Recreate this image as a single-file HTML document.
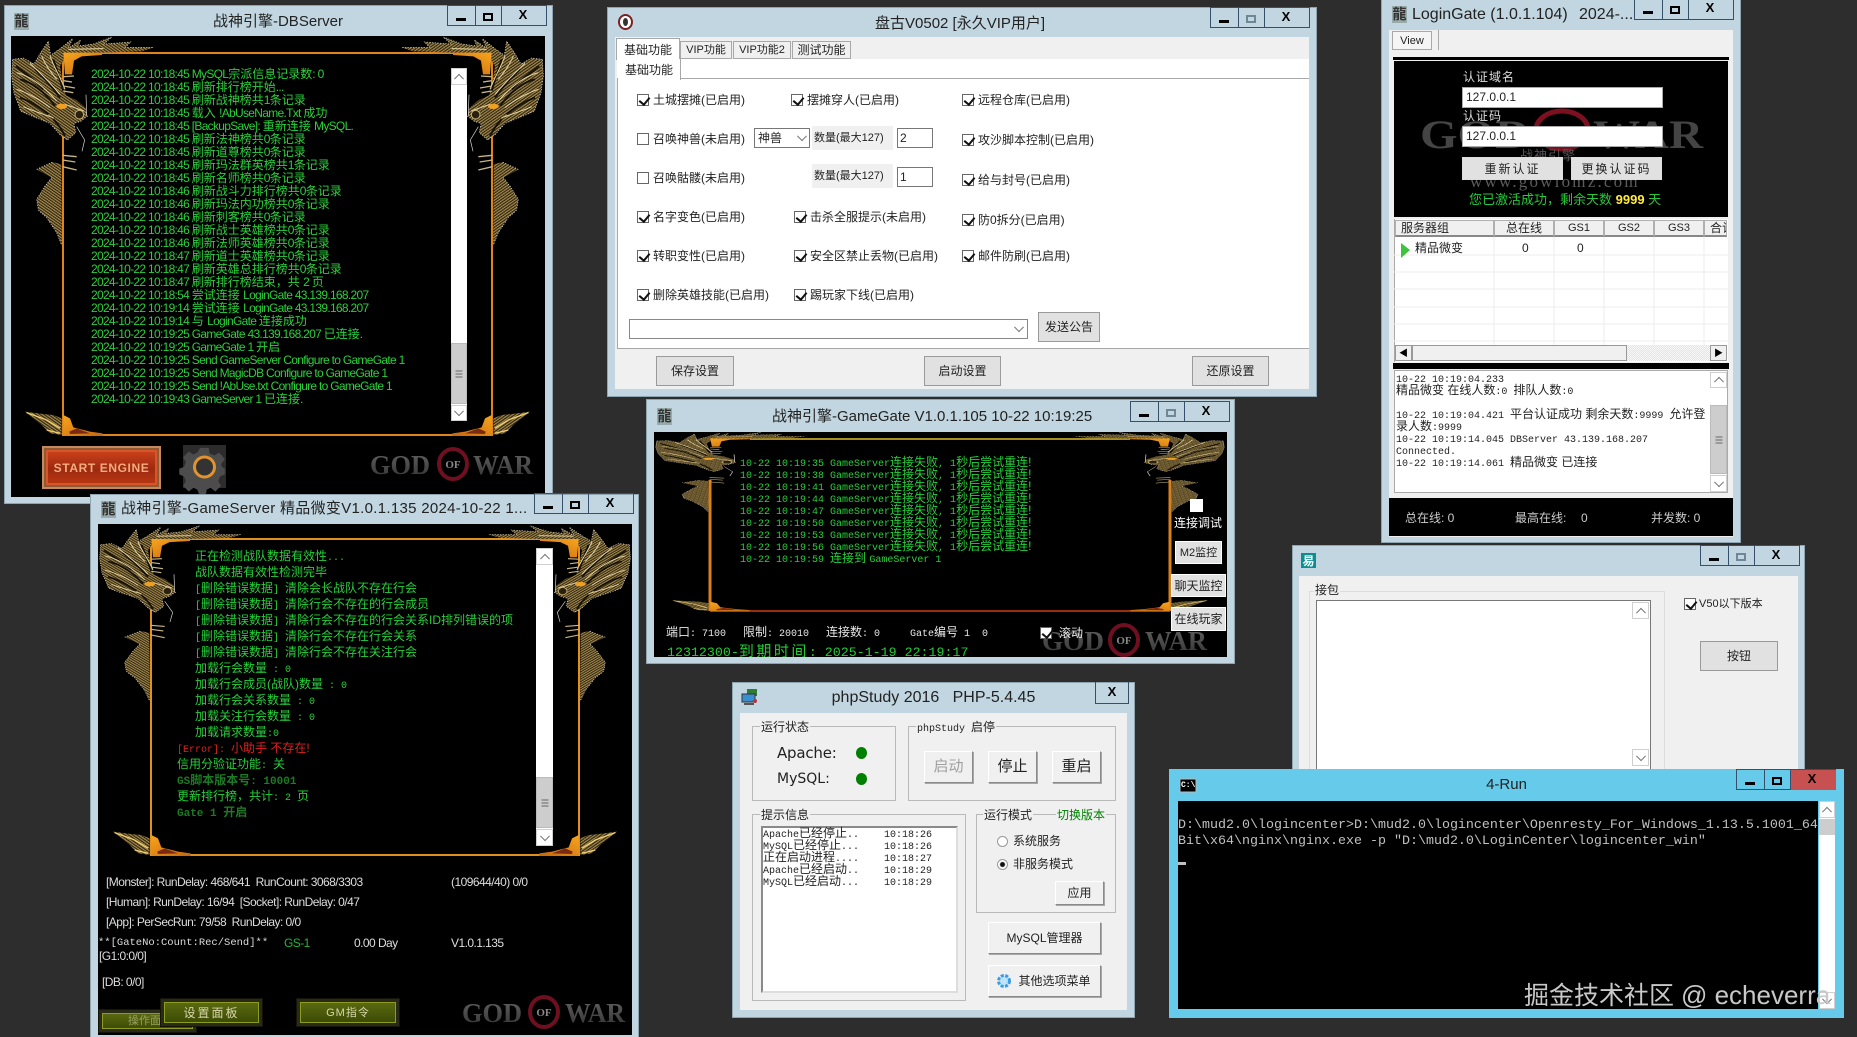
<!DOCTYPE html>
<html lang="zh-CN"><head><meta charset="utf-8"><title>Windows</title>
<style>
*{box-sizing:border-box;margin:0;padding:0}
html,body{width:1857px;height:1037px;overflow:hidden;background:#2d2d2d}
body{position:relative;font:12px/16px "Liberation Sans","Noto Sans CJK SC",sans-serif;color:#222}
div{position:absolute}
p{position:absolute;white-space:nowrap;line-height:16px}
i{font-style:normal}
svg{position:absolute;overflow:visible}
.win{background:#c1d6e0;border:1px solid #8ea5b1}
.k{background:#000}
.cl{background:#f0f0f0}
.wh{background:#fff}
.t{font-size:15px;line-height:20px;color:#222;text-align:center}
.tb{width:100px;height:21px;border:1px solid #34506a;border-top-color:#34506a}
.tb u{position:absolute;top:0;bottom:0;width:1px;background:#34506a}
.tb b{position:absolute}
.tb .mn{left:8px;top:12px;width:10px;height:3px;background:#000}
.tb .mx{left:35px;top:7px;width:10px;height:8px;border:2px solid #000}
.tb.g .mx{border-color:#6d8795}
.tb .xx{left:68px;top:1px;width:14px;text-align:center;font:bold 13px/16px "Liberation Sans",sans-serif;color:#000}
.ic{font:bold 14px/17px "Noto Sans CJK TC",sans-serif;color:#333;background:#9aa;text-align:center;width:15px;height:17px}
.db{color:#2bd03c;line-height:13px}
.ln{position:static;height:13px;white-space:pre}
.db i{font:12px/13px "Liberation Sans",sans-serif;letter-spacing:-.7px}
.mo{color:#27cf3b}
.mo .ln{height:16px;line-height:16px}
.mo i,.mi i{font:10px/12px "Liberation Mono",monospace}
.mo .bd i{font-weight:bold;font-size:11px}
.bd{color:#1c7a24;font-weight:bold;margin-left:-18px}
.mi .ln{height:12px;line-height:12px}
.nr{font:12px/16px "Liberation Sans",sans-serif;letter-spacing:-.55px;color:#ddd}
.ar{background:#fff;border:1px solid #cfcfcf}
.up:after,.dn:after{content:"";position:absolute;left:50%;top:50%;width:6px;height:6px;border-left:1px solid #777;border-top:1px solid #777}
.up:after{transform:translate(-50%,-25%) rotate(45deg)}
.dn:after{transform:translate(-50%,-75%) rotate(225deg)}
.th{background:#cdcdcd;border:1px solid #bbb}
.th:after{content:"";position:absolute;left:50%;top:50%;width:7px;height:7px;transform:translate(-50%,-50%);background:repeating-linear-gradient(#666 0 1px,transparent 1px 3px)}
.cb{position:absolute;width:12px;height:12px;background:#fff;border:1px solid #666}
.ck:after{content:"";position:absolute;left:3px;top:0;width:5px;height:8px;border-right:2px solid #111;border-bottom:2px solid #111;transform:rotate(40deg)}
.btn{display:flex;align-items:center;justify-content:center;background:#e1e1e1;border:1px solid #9a9a9a;white-space:nowrap}
.b3{display:flex;align-items:center;justify-content:center;background:#f0f0f0;border:1px solid #fff;border-right-color:#8a8a8a;border-bottom-color:#8a8a8a;box-shadow:1px 1px 0 #a8a8a8;white-space:nowrap}
.gb{border:1px solid #b9b9b9}
.la{background:#f0f0f0;padding:0 1px}
.tab{background:#f0f0f0;border:1px solid #a8a8a8;display:flex;align-items:center;justify-content:center;white-space:nowrap}
.pl{background:linear-gradient(#5b6a10,#3b4a06);border:3px solid #2a2a18;outline:1px solid #141408;display:flex;align-items:center;justify-content:center;color:#d7d7a8;white-space:nowrap;box-shadow:inset 0 0 0 1px #8c9c20}
.hd{background:#f0f0f0;border:1px solid #b0b0b0;border-bottom:2px solid #888;display:flex;align-items:center;justify-content:center;white-space:nowrap}
</style></head><body>

<svg width="0" height="0" style="left:0;top:0"><defs>
<pattern id="sc" width="7" height="7" patternUnits="userSpaceOnUse" patternTransform="rotate(35)">
<rect width="7" height="7" fill="#2c220e"/><rect width="7" height="3" fill="#a98f52"/><rect y="3" width="2" height="4" fill="#64522a"/></pattern>
<linearGradient id="gw" x1="0" y1="0" x2="0" y2="1"><stop offset="0" stop-color="#636363"/><stop offset="1" stop-color="#333"/></linearGradient>
<linearGradient id="co" x1="0" y1="0" x2="1" y2="1"><stop offset="0" stop-color="#f7a51e"/><stop offset="1" stop-color="#c8660f"/></linearGradient>
<symbol id="dr" viewBox="0 0 450 660" preserveAspectRatio="none">
<path fill="url(#sc)" d="M8 70L40 66L72 84L92 50L115 15L122 58L150 38L188 8L176 36L212 12L204 30L250 24L305 3L282 24L362 18L346 34L432 34L395 46L278 50L170 56L150 92L160 150L168 178L198 192L226 214L233 240L212 256L192 262L197 290L172 312L150 296L120 262L70 242L32 226L12 170L5 120Z"/>
<path fill="none" stroke="#fff" stroke-width="2" stroke-dasharray="3 5" d="M8 70L40 66L72 84L92 50L115 15L122 58L150 38L188 8L176 36L212 12L204 30L250 24L305 3L282 24L362 18L346 34L432 34M233 240L212 256L192 262L197 290L172 312L150 296L120 262L70 242L32 226L12 170L5 120L8 70"/>
<path fill="none" stroke="#000" stroke-width="6" opacity=".8" d="M30 130C70 140 105 170 135 210M75 100C105 130 125 150 150 185M30 185C60 195 90 215 115 235M130 70C140 100 150 130 160 165M130 250C145 265 155 280 165 300M18 90C40 110 70 125 100 160"/>
<path fill="none" stroke="#e4d6a4" stroke-width="3" d="M20 110C60 120 100 150 140 195M60 82C90 110 120 140 150 175M20 160C50 170 90 190 120 215M40 212C70 225 100 235 130 245M120 60C130 90 150 120 165 160M175 40L280 38M165 205L222 225M95 60C105 85 120 105 140 130"/>
<ellipse cx="155" cy="211" rx="16" ry="8" fill="#f0a020"/>
<circle cx="208" cy="236" r="13" fill="#2a2010" stroke="#c8b070" stroke-width="3"/>
<path fill="none" stroke="#ddd" stroke-width="2" d="M200 272L224 312L216 346M228 176L230 238"/>
<path fill="none" stroke="#c8b684" stroke-width="4" d="M160 122L192 120M160 134L186 138M160 150L195 156M160 165L190 170M158 358L200 362M158 372L196 378M158 392L200 402"/>
<path fill="url(#sc)" d="M80 400L128 378L154 385L156 630L140 590L110 545L85 522L80 490L105 450L125 425Z"/>
<path fill="none" stroke="#fff" stroke-width="2" stroke-dasharray="3 5" d="M80 400L128 378M125 425L105 450L80 490L85 522L110 545L140 590L154 625"/>
<path fill="url(#co)" d="M160 50L276 50L276 57L215 61L192 74L186 115L165 115Z"/>
</symbol>
<symbol id="fb" viewBox="0 0 300 120" preserveAspectRatio="none">
<path fill="url(#sc)" d="M45 35L100 42L130 45L155 55L155 105L120 100L95 75Z"/>
<path fill="none" stroke="#f0d070" stroke-width="4" d="M50 38L110 60L150 85M110 90L150 100"/>
<path fill="url(#co)" d="M160 45L180 55L190 82L240 95L278 100L278 108L160 108Z"/>
<path fill="#7a2a10" d="M178 95L200 85L240 100L180 102Z"/>
</symbol>
</defs></svg>

<!-- DBServer -->
<div class="win" style="left:4px;top:5px;width:549px;height:499px"></div>
<div class="k" style="left:11px;top:36px;width:534px;height:461px"></div>
<div class="ic" style="left:14px;top:13px">龍</div>
<p class="t" style="left:11px;top:12px;width:534px">战神引擎-DBServer</p>
<div class="tb" style="left:447px;top:5px"><u style="left:27px"></u><u style="left:53px"></u><b class="mn"></b><b class="mx"></b><b class="xx">X</b></div>
<svg width="1857" height="1037" style="left:0;top:0">
<rect x="63" y="53" width="429" height="382" fill="none" stroke="#e0831c" stroke-width="2"/>
<use href="#dr" x="10" y="36" width="150" height="220"/>
<use href="#dr" x="10" y="36" width="150" height="220" transform="matrix(-1 0 0 1 555 0)"/>
<use href="#fb" x="10" y="400" width="100" height="40"/>
<use href="#fb" x="10" y="400" width="100" height="40" transform="matrix(-1 0 0 1 555 0)"/>
</svg>
<div class="db" style="left:91px;top:68px">
<div class="ln"><i>2024-10-22 10:18:45 MySQL</i>宗派信息记录数<i>: 0</i></div>
<div class="ln"><i>2024-10-22 10:18:45 </i>刷新排行榜开始<i>...</i></div>
<div class="ln"><i>2024-10-22 10:18:45 </i>刷新战神榜共<i>1</i>条记录</div>
<div class="ln"><i>2024-10-22 10:18:45 </i>载入 <i>!AbUseName.Txt </i>成功</div>
<div class="ln"><i>2024-10-22 10:18:45 [BackupSave]: </i>重新连接 <i>MySQL.</i></div>
<div class="ln"><i>2024-10-22 10:18:45 </i>刷新法神榜共<i>0</i>条记录</div>
<div class="ln"><i>2024-10-22 10:18:45 </i>刷新道尊榜共<i>0</i>条记录</div>
<div class="ln"><i>2024-10-22 10:18:45 </i>刷新玛法群英榜共<i>1</i>条记录</div>
<div class="ln"><i>2024-10-22 10:18:45 </i>刷新名师榜共<i>0</i>条记录</div>
<div class="ln"><i>2024-10-22 10:18:46 </i>刷新战斗力排行榜共<i>0</i>条记录</div>
<div class="ln"><i>2024-10-22 10:18:46 </i>刷新玛法内功榜共<i>0</i>条记录</div>
<div class="ln"><i>2024-10-22 10:18:46 </i>刷新刺客榜共<i>0</i>条记录</div>
<div class="ln"><i>2024-10-22 10:18:46 </i>刷新战士英雄榜共<i>0</i>条记录</div>
<div class="ln"><i>2024-10-22 10:18:46 </i>刷新法师英雄榜共<i>0</i>条记录</div>
<div class="ln"><i>2024-10-22 10:18:47 </i>刷新道士英雄榜共<i>0</i>条记录</div>
<div class="ln"><i>2024-10-22 10:18:47 </i>刷新英雄总排行榜共<i>0</i>条记录</div>
<div class="ln"><i>2024-10-22 10:18:47 </i>刷新排行榜结束，共 <i>2 </i>页</div>
<div class="ln"><i>2024-10-22 10:18:54 </i>尝试连接 <i>LoginGate 43.139.168.207</i></div>
<div class="ln"><i>2024-10-22 10:19:14 </i>尝试连接 <i>LoginGate 43.139.168.207</i></div>
<div class="ln"><i>2024-10-22 10:19:14 </i>与 <i>LoginGate </i>连接成功</div>
<div class="ln"><i>2024-10-22 10:19:25 GameGate 43.139.168.207 </i>已连接<i>.</i></div>
<div class="ln"><i>2024-10-22 10:19:25 GameGate 1 </i>开启</div>
<div class="ln"><i>2024-10-22 10:19:25 Send GameServer Configure to GameGate 1</i></div>
<div class="ln"><i>2024-10-22 10:19:25 Send MagicDB Configure to GameGate 1</i></div>
<div class="ln"><i>2024-10-22 10:19:25 Send !AbUse.txt Configure to GameGate 1</i></div>
<div class="ln"><i>2024-10-22 10:19:43 GameServer 1 </i>已连接<i>.</i></div>
</div>
<div class="wh" style="left:451px;top:68px;width:16px;height:353px"></div>
<div class="ar up" style="left:451px;top:68px;width:16px;height:17px"></div>
<div class="th" style="left:451px;top:343px;width:16px;height:61px"></div>
<div class="ar dn" style="left:451px;top:405px;width:16px;height:16px"></div>
<div style="left:42px;top:446px;width:119px;height:43px;background:#8e5a34;border:2px solid #c48a5e;padding:0"></div>
<div style="left:46px;top:450px;width:111px;height:35px;background:linear-gradient(#c8401a,#9c2a10 55%,#b83612);border:2px solid #d8552a;display:flex;align-items:center;justify-content:center;color:#f4ab7e;font:bold 12px/16px 'Liberation Sans',sans-serif;letter-spacing:.6px;white-space:nowrap">START ENGINE</div>
<div style="left:183px;top:445px;width:43px;height:43px;background:#2c2c2c"></div>
<svg width="43" height="43" viewBox="0 0 43 43" style="left:183px;top:445px">
<path fill="#4c4c4c" d="M17 3h9l1 6 5 2 5-3 6 7-4 5 1 3 3 2v6l-5 2-2 5 3 5-6 6-5-4-4 2-1 5h-7l-2-5-4-2-5 4-6-6 3-5-2-5-5-2v-6l5-2 2-5-3-5 6-6 5 3 4-2z" transform="translate(1 0) scale(.95)"/>
<circle cx="21.500" cy="22" r="10" fill="#333" stroke="#e2932e" stroke-width="3"/>
</svg>
<svg width="163" height="34" viewBox="0 0 163 34" style="left:370px;top:448px">
<text x="0" y="26" font-family="Liberation Serif" font-weight="bold" font-size="27" textLength="60" lengthAdjust="spacingAndGlyphs" fill="url(#gw)">GOD</text>
<ellipse cx="83" cy="16" rx="14" ry="15" fill="none" stroke="#6e1020" stroke-width="4"/>
<text x="83" y="20" text-anchor="middle" font-family="Liberation Serif" font-size="11" font-weight="bold" fill="#888">OF</text>
<text x="103" y="26" font-family="Liberation Serif" font-weight="bold" font-size="27" textLength="60" lengthAdjust="spacingAndGlyphs" fill="url(#gw)">WAR</text></svg>

<!-- Pangu -->
<div class="win" style="left:607px;top:7px;width:710px;height:390px"></div>
<div class="cl" style="left:615px;top:37px;width:694px;height:352px"></div>
<div style="left:618px;top:14px;width:15px;height:16px;background:#fff;border:2px solid #7a2020;border-radius:50%"><div style="left:3px;top:2px;width:5px;height:8px;background:#333;border-radius:50%"></div></div>
<p class="t" style="left:875px;top:14px">盘古V0502 [永久VIP用户]</p>
<div class="tb g" style="left:1210px;top:7px"><u style="left:27px"></u><u style="left:53px"></u><b class="mn"></b><b class="mx"></b><b class="xx">X</b></div>
<div class="wh" style="left:617px;top:59px;width:692px;height:290px;border:1px solid #a8a8a8;border-right:0"></div>
<div class="cl" style="left:617px;top:59px;width:692px;height:20px;background:#fff;border-bottom:1px solid #a8a8a8"></div>
<div class="tab" style="left:733px;top:41px;width:58px;height:18px;font-size:11px">VIP功能2</div>
<div class="tab" style="left:680px;top:41px;width:52px;height:18px;font-size:11px">VIP功能</div>
<div class="tab" style="left:792px;top:41px;width:59px;height:18px">测试功能</div>
<div class="tab" style="left:616px;top:38px;width:64px;height:22px;background:#fff;border-bottom:0">基础功能</div>
<div class="wh" style="left:618px;top:59px;width:63px;height:21px;border-right:1px solid #a8a8a8;display:flex;align-items:center;justify-content:center">基础功能</div>

<i class="cb ck" style="left:637px;top:94px"></i><p style="left:653px;top:92px">土城摆摊(已启用)</p>
<i class="cb ck" style="left:791px;top:94px"></i><p style="left:807px;top:92px">摆摊穿人(已启用)</p>
<i class="cb ck" style="left:962px;top:94px"></i><p style="left:978px;top:92px">远程仓库(已启用)</p>
<i class="cb" style="left:637px;top:133px"></i><p style="left:653px;top:131px">召唤神兽(未启用)</p>
<div class="wh" style="left:754px;top:128px;width:56px;height:20px;border:1px solid #777;padding-left:3px;line-height:18px">神兽<div class="dn" style="right:0;top:0;width:14px;height:18px"></div></div>
<div style="left:812px;top:126px;width:81px;height:24px;background:#f0f0f0"></div><p style="left:814px;top:130px;font-size:11px">数量(最大127)</p>
<div class="wh" style="left:897px;top:128px;width:36px;height:20px;border:1px solid #777;padding-left:2px;line-height:18px">2</div>
<i class="cb ck" style="left:962px;top:134px"></i><p style="left:978px;top:132px">攻沙脚本控制(已启用)</p>
<i class="cb" style="left:637px;top:172px"></i><p style="left:653px;top:170px">召唤骷髅(未启用)</p>
<div style="left:812px;top:164px;width:81px;height:24px;background:#f0f0f0"></div><p style="left:814px;top:168px;font-size:11px">数量(最大127)</p>
<div class="wh" style="left:897px;top:167px;width:36px;height:20px;border:1px solid #777;padding-left:2px;line-height:18px">1</div>
<i class="cb ck" style="left:962px;top:174px"></i><p style="left:978px;top:172px">给与封号(已启用)</p>
<i class="cb ck" style="left:637px;top:211px"></i><p style="left:653px;top:209px">名字变色(已启用)</p>
<i class="cb ck" style="left:794px;top:211px"></i><p style="left:810px;top:209px">击杀全服提示(未启用)</p>
<i class="cb ck" style="left:962px;top:214px"></i><p style="left:978px;top:212px">防0拆分(已启用)</p>
<i class="cb ck" style="left:637px;top:250px"></i><p style="left:653px;top:248px">转职变性(已启用)</p>
<i class="cb ck" style="left:794px;top:250px"></i><p style="left:810px;top:248px">安全区禁止丢物(已启用)</p>
<i class="cb ck" style="left:962px;top:250px"></i><p style="left:978px;top:248px">邮件防刷(已启用)</p>
<i class="cb ck" style="left:637px;top:289px"></i><p style="left:653px;top:287px">删除英雄技能(已启用)</p>
<i class="cb ck" style="left:794px;top:289px"></i><p style="left:810px;top:287px">踢玩家下线(已启用)</p>
<div class="wh" style="left:629px;top:319px;width:399px;height:20px;border:1px solid #888"><div class="dn" style="right:1px;top:1px;width:14px;height:16px"></div></div>
<div class="btn" style="left:1038px;top:312px;width:62px;height:30px">发送公告</div>
<div class="btn" style="left:656px;top:356px;width:78px;height:30px">保存设置</div>
<div class="btn" style="left:924px;top:356px;width:77px;height:30px">启动设置</div>
<div class="btn" style="left:1192px;top:356px;width:77px;height:30px">还原设置</div>

<!-- LoginGate -->
<div class="win" style="left:1381px;top:0;width:360px;height:543px;border-top:0"></div>
<div class="cl" style="left:1389px;top:30px;width:344px;height:507px"></div>
<div class="ic" style="left:1392px;top:6px">龍</div>
<p style="left:1412px;top:5px;font-size:16px;line-height:20px">LoginGate (1.0.1.104)</p>
<p style="left:1579px;top:5px;font-size:16px;line-height:20px">2024-...</p>
<div class="tb" style="left:1634px;top:0;height:20px;border-top:0"><u style="left:27px"></u><u style="left:53px"></u><b class="mn" style="top:11px"></b><b class="mx" style="top:6px"></b><b class="xx" style="top:0">X</b></div>
<div class="tab" style="left:1392px;top:31px;width:40px;height:19px;font-size:11px;background:#f5f5f5">View</div>
<div style="left:1438px;top:30px;width:1px;height:20px;background:#a8a8a8"></div>
<div class="k" style="left:1393px;top:57px;width:336px;height:3px"></div>
<div class="k" style="left:1394px;top:61px;width:334px;height:156px"></div>
<svg width="283" height="44" viewBox="0 0 283 44" style="left:1420px;top:110px">
<text x="0" y="38" font-family="Liberation Serif" font-weight="bold" font-size="40" textLength="110" lengthAdjust="spacingAndGlyphs" fill="#444">GOD</text>
<ellipse cx="142" cy="20" rx="26" ry="19" fill="none" stroke="#7c1020" stroke-width="5"/>
<text x="173" y="38" font-family="Liberation Serif" font-weight="bold" font-size="40" textLength="110" lengthAdjust="spacingAndGlyphs" fill="#444">WAR</text></svg>
<p style="left:1463px;top:69px;color:#ddd;letter-spacing:1px">认证域名</p>
<div class="wh" style="left:1462px;top:87px;width:201px;height:21px;border:1px solid #aaa;padding-left:3px;line-height:19px">127.0.0.1</div>
<p style="left:1463px;top:108px;color:#ddd;letter-spacing:1px">认证码</p>
<div class="wh" style="left:1462px;top:126px;width:201px;height:21px;border:1px solid #aaa;padding-left:3px;line-height:19px">127.0.0.1</div>
<p style="left:1520px;top:148px;color:#555;letter-spacing:1px;font-size:13px">战神引擎</p>
<p style="left:1470px;top:173px;color:#5c5c5c;font:17px/18px 'Liberation Serif',serif;letter-spacing:2.2px">www.gowlomz.com</p>
<div class="btn" style="left:1462px;top:157px;width:101px;height:23px;border-color:#ddd;letter-spacing:2px">重新认证</div>
<div class="btn" style="left:1571px;top:157px;width:91px;height:23px;border-color:#ddd;letter-spacing:2px">更换认证码</div>
<p style="left:1469px;top:192px;color:#25c93a;font-size:13px">您已激活成功，剩余天数<b style="color:#ffec3c;font-size:13px"> 9999 </b>天</p>

<div class="wh" style="left:1394px;top:219px;width:334px;height:143px;border-left:1px solid #aaa"></div>
<div class="hd" style="left:1395px;top:220px;width:99px;height:17px;justify-content:flex-start;padding-left:5px">服务器组</div>
<div class="hd" style="left:1494px;top:220px;width:60px;height:17px">总在线</div>
<div class="hd" style="left:1554px;top:220px;width:50px;height:17px;font-size:11px">GS1</div>
<div class="hd" style="left:1604px;top:220px;width:50px;height:17px;font-size:11px">GS2</div>
<div class="hd" style="left:1654px;top:220px;width:50px;height:17px;font-size:11px">GS3</div>
<div class="hd" style="left:1704px;top:220px;width:23px;height:17px;overflow:hidden;justify-content:flex-start;padding-left:5px">合计</div>
<svg width="334" height="125" viewBox="0 0 334 125" style="left:1394px;top:237px">
<path stroke="#ececec" fill="none" d="M0 18H334M0 35H334M0 52H334M0 70H334M0 87H334M0 104H334M100 0V108M160 0V108M210 0V108M260 0V108M310 0V108"/>
<path fill="#3fc23f" d="M7 6L16 13L7 21Z"/></svg>
<p style="left:1415px;top:240px">精品微变</p><p style="left:1522px;top:240px">0</p><p style="left:1577px;top:240px">0</p>
<div style="left:1395px;top:345px;width:332px;height:16px;background:repeating-conic-gradient(#e4e4e4 0 25%,#f8f8f8 0 50%) 0 0/2px 2px"></div>
<div class="btn" style="left:1395px;top:345px;width:17px;height:16px;color:#000;font-size:9px;background:#f0f0f0">◀</div>
<div style="left:1412px;top:345px;width:215px;height:16px;background:#f0f0f0;border:1px solid #999"></div>
<div class="btn" style="left:1710px;top:345px;width:17px;height:16px;color:#000;font-size:9px;background:#f0f0f0">▶</div>
<div class="k" style="left:1393px;top:363px;width:336px;height:6px"></div>
<div class="wh" style="left:1394px;top:370px;width:334px;height:123px;border:1px solid #aaa"></div>
<div class="mi" style="left:1396px;top:372px;font-size:12px;line-height:12px">
<div class="ln"><i>10-22 10:19:04.233</i></div>
<div class="ln">精品微变 在线人数<i>:0 </i>排队人数<i>:0</i></div>
<div class="ln"></div>
<div class="ln"><i>10-22 10:19:04.421 </i>平台认证成功 剩余天数<i>:9999 </i>允许登</div>
<div class="ln">录人数<i>:9999</i></div>
<div class="ln"><i>10-22 10:19:14.045 DBServer 43.139.168.207</i></div>
<div class="ln"><i>Connected.</i></div>
<div class="ln"><i>10-22 10:19:14.061 </i>精品微变 已连接</div>
</div>
<div class="ar up" style="left:1710px;top:372px;width:17px;height:16px"></div>
<div class="wh" style="left:1710px;top:388px;width:17px;height:87px"></div>
<div class="th" style="left:1710px;top:405px;width:17px;height:69px"></div>
<div class="ar dn" style="left:1710px;top:475px;width:17px;height:17px"></div>
<div class="k" style="left:1389px;top:498px;width:344px;height:38px"></div>
<p style="left:1405px;top:510px;color:#ccc">总在线<i>: 0</i></p>
<p style="left:1515px;top:510px;color:#ccc">最高在线<i>:</i></p><p style="left:1581px;top:510px;color:#ccc">0</p>
<p style="left:1651px;top:510px;color:#ccc">并发数<i>: 0</i></p>

<!-- GameGate -->
<div class="win" style="left:646px;top:399px;width:589px;height:265px"></div>
<div class="k" style="left:654px;top:432px;width:573px;height:225px"></div>
<div class="ic" style="left:657px;top:408px">龍</div>
<p class="t" style="left:772px;top:407px">战神引擎-GameGate V1.0.1.105 10-22 10:19:25</p>
<div class="tb g" style="left:1130px;top:401px"><u style="left:27px"></u><u style="left:53px"></u><b class="mn"></b><b class="mx"></b><b class="xx">X</b></div>
<svg width="1857" height="1037" style="left:0;top:0">
<path d="M750 439H1130" stroke="#a88c20" stroke-width="2"/>
<path d="M710 480V611M1170 480V611" stroke="#d8801c" stroke-width="3"/>
<path d="M710 611H1170" stroke="#9c2c10" stroke-width="2"/>
<use href="#dr" x="654" y="432" width="158" height="84"/>
<use href="#dr" x="654" y="432" width="158" height="84" transform="matrix(-1 0 0 1 1880 0)"/>
<use href="#fb" x="657" y="595" width="100" height="18"/>
<use href="#fb" x="657" y="595" width="100" height="18" transform="matrix(-1 0 0 1 1880 0)"/>
</svg>
<div class="mi" style="left:740px;top:456px;color:#27cf3b;font-size:12px;line-height:12px">
<div class="ln"><i>10-22 10:19:35 GameServer</i>连接失败<i>, 1</i>秒后尝试重连!</div>
<div class="ln"><i>10-22 10:19:38 GameServer</i>连接失败<i>, 1</i>秒后尝试重连!</div>
<div class="ln"><i>10-22 10:19:41 GameServer</i>连接失败<i>, 1</i>秒后尝试重连!</div>
<div class="ln"><i>10-22 10:19:44 GameServer</i>连接失败<i>, 1</i>秒后尝试重连!</div>
<div class="ln"><i>10-22 10:19:47 GameServer</i>连接失败<i>, 1</i>秒后尝试重连!</div>
<div class="ln"><i>10-22 10:19:50 GameServer</i>连接失败<i>, 1</i>秒后尝试重连!</div>
<div class="ln"><i>10-22 10:19:53 GameServer</i>连接失败<i>, 1</i>秒后尝试重连!</div>
<div class="ln"><i>10-22 10:19:56 GameServer</i>连接失败<i>, 1</i>秒后尝试重连!</div>
<div class="ln"><i>10-22 10:19:59 </i>连接到 <i>GameServer 1</i></div>
</div>
<div class="wh" style="left:1190px;top:499px;width:13px;height:13px"></div>
<p style="left:1174px;top:515px;color:#fff">连接调试</p>
<div class="btn" style="left:1175px;top:541px;width:47px;height:23px;border:1px solid #fff;font-size:11px">M2监控</div>
<div class="btn" style="left:1171px;top:574px;width:55px;height:23px;border:1px solid #fff">聊天监控</div>
<div class="btn" style="left:1171px;top:607px;width:55px;height:24px;border:1px solid #fff">在线玩家</div>
<svg width="168" height="34" viewBox="0 0 168 34" style="left:1042px;top:624px">
<text x="0" y="26" font-family="Liberation Serif" font-weight="bold" font-size="27" textLength="62" lengthAdjust="spacingAndGlyphs" fill="url(#gw)">GOD</text>
<ellipse cx="82" cy="16" rx="14" ry="15" fill="none" stroke="#6e1020" stroke-width="4"/>
<text x="82" y="20" text-anchor="middle" font-family="Liberation Serif" font-size="11" font-weight="bold" fill="#888">OF</text>
<text x="103" y="26" font-family="Liberation Serif" font-weight="bold" font-size="27" textLength="62" lengthAdjust="spacingAndGlyphs" fill="url(#gw)">WAR</text></svg>
<div class="mi" style="left:666px;top:626px;color:#e8e8e8;white-space:nowrap;font-size:12px;line-height:12px">端口<i>: 7100</i></div>
<div class="mi" style="left:743px;top:626px;color:#e8e8e8;white-space:nowrap;font-size:12px;line-height:12px">限制<i>: 20010</i></div>
<div class="mi" style="left:826px;top:626px;color:#e8e8e8;white-space:nowrap;font-size:12px;line-height:12px">连接数<i>: 0</i></div>
<div class="mi" style="left:910px;top:626px;color:#e8e8e8;white-space:pre;font-size:12px;line-height:12px"><i>Gate</i>编号<i> 1  0</i></div>
<i class="cb ck" style="left:1040px;top:627px"></i>
<p style="left:1059px;top:625px;color:#e8e8e8">滚动</p>
<div style="left:667px;top:644px;width:560px;height:13px;overflow:hidden;color:#22cc33;font-size:15px;line-height:16px;white-space:pre"><span style="font:13.300px/16px 'Liberation Mono',monospace">12312300-</span><span style="letter-spacing:2.5px">到期时间</span><span style="font:13.300px/16px 'Liberation Mono',monospace">: 2025-1-19 22:19:17</span></div>

<!-- GameServer -->
<div class="win" style="left:90px;top:494px;width:549px;height:543px;border-bottom:0"></div>
<div class="k" style="left:98px;top:524px;width:534px;height:511px"></div>
<div class="ic" style="left:101px;top:501px">龍</div>
<p class="t" style="left:121px;top:499px;font-size:15px;letter-spacing:.3px">战神引擎-GameServer 精品微变V1.0.1.135 2024-10-22 1...</p>
<div class="tb" style="left:534px;top:493px"><u style="left:27px"></u><u style="left:53px"></u><b class="mn"></b><b class="mx"></b><b class="xx">X</b></div>
<svg width="1857" height="1037" style="left:0;top:0">
<rect x="151" y="539" width="428" height="316" fill="none" stroke="#e0901c" stroke-width="2"/>
<use href="#dr" x="98" y="525" width="150" height="185"/>
<use href="#dr" x="98" y="525" width="150" height="185" transform="matrix(-1 0 0 1 730 0)"/>
<use href="#fb" x="98" y="820" width="100" height="40"/>
<use href="#fb" x="98" y="820" width="100" height="40" transform="matrix(-1 0 0 1 730 0)"/>
</svg>
<div class="mo" style="left:195px;top:548px">
<div class="ln">正在检测战队数据有效性<i>...</i></div>
<div class="ln">战队数据有效性检测完毕</div>
<div class="ln"><i>[</i>删除错误数据<i>] </i>清除会长战队不存在行会</div>
<div class="ln"><i>[</i>删除错误数据<i>] </i>清除行会不存在的行会成员</div>
<div class="ln"><i>[</i>删除错误数据<i>] </i>清除行会不存在的行会关系ID排列错误的项</div>
<div class="ln"><i>[</i>删除错误数据<i>] </i>清除行会不存在行会关系</div>
<div class="ln"><i>[</i>删除错误数据<i>] </i>清除行会不存在关注行会</div>
<div class="ln">加载行会数量<i> : 0</i></div>
<div class="ln">加载行会成员(战队)数量<i> : 0</i></div>
<div class="ln">加载行会关系数量<i> : 0</i></div>
<div class="ln">加载关注行会数量<i> : 0</i></div>
<div class="ln">加载请求数量<i>:0</i></div>
<div class="ln" style="margin-left:-18px;color:#e02020"><i>[Error]: </i>小助手 不存在!</div>
<div class="ln" style="margin-left:-18px">信用分验证功能<i>: </i>关</div>
<div class="ln bd"><i>GS</i>脚本版本号<i>: 10001</i></div>
<div class="ln" style="margin-left:-18px">更新排行榜，共计<i>: 2 </i>页</div>
<div class="ln bd"><i>Gate 1 </i>开启</div>
</div>
<div class="wh" style="left:536px;top:548px;width:17px;height:298px"></div>
<div class="ar up" style="left:536px;top:548px;width:17px;height:17px"></div>
<div class="th" style="left:536px;top:777px;width:17px;height:51px"></div>
<div class="ar dn" style="left:536px;top:829px;width:17px;height:17px"></div>
<p class="nr" style="left:106px;top:874px;white-space:pre">[Monster]: RunDelay: 468/641  RunCount: 3068/3303</p>
<p class="nr" style="left:451px;top:874px">(109644/40) 0/0</p>
<p class="nr" style="left:106px;top:894px;white-space:pre">[Human]: RunDelay: 16/94  [Socket]: RunDelay: 0/47</p>
<p class="nr" style="left:106px;top:914px;white-space:pre">[App]: PerSecRun: 79/58  RunDelay: 0/0</p>
<p style="left:98px;top:935px;color:#ddd;font:10.500px/16px 'Liberation Mono',monospace">**[GateNo:Count:Rec/Send]**</p>
<p class="nr" style="left:284px;top:935px;color:#25b636">GS-1</p>
<p class="nr" style="left:354px;top:935px">0.00 Day</p>
<p class="nr" style="left:451px;top:935px">V1.0.1.135</p>
<p class="nr" style="left:99px;top:948px">[G1:0:0/0]</p>
<p class="nr" style="left:102px;top:974px">[DB: 0/0]</p>
<div class="pl" style="left:99px;top:1010px;width:97px;height:22px;font-size:11px;justify-content:flex-start;padding-left:26px;color:#9aa060">操作面板</div>
<div class="pl" style="left:161px;top:999px;width:101px;height:27px;letter-spacing:2px">设置面板</div>
<div class="pl" style="left:297px;top:999px;width:102px;height:27px;letter-spacing:1px;font-size:11px">GM指令</div>
<svg width="163" height="34" viewBox="0 0 163 34" style="left:462px;top:996px">
<text x="0" y="26" font-family="Liberation Serif" font-weight="bold" font-size="27" textLength="60" lengthAdjust="spacingAndGlyphs" fill="url(#gw)">GOD</text>
<ellipse cx="82" cy="16" rx="14" ry="15" fill="none" stroke="#6e1020" stroke-width="4"/>
<text x="82" y="20" text-anchor="middle" font-family="Liberation Serif" font-size="11" font-weight="bold" fill="#888">OF</text>
<text x="103" y="26" font-family="Liberation Serif" font-weight="bold" font-size="27" textLength="60" lengthAdjust="spacingAndGlyphs" fill="url(#gw)">WAR</text></svg>

<!-- phpStudy -->
<div class="win" style="left:732px;top:682px;width:403px;height:336px"></div>
<div class="cl" style="left:740px;top:713px;width:387px;height:297px"></div>
<svg width="16" height="16" viewBox="0 0 16 16" style="left:742px;top:689px"><rect x="5" y="0" width="10" height="7" fill="#2e7d32"/><rect x="0" y="5" width="13" height="8" fill="#3a8fd0" stroke="#333"/><path d="M2 15H12" stroke="#555" stroke-width="2"/><circle cx="13" cy="12" r="2" fill="#b33"/></svg>
<p style="left:732px;top:688px;width:403px;text-align:center;font-size:16px;line-height:20px;white-space:pre">phpStudy 2016   PHP-5.4.45</p>
<div style="left:1095px;top:682px;width:34px;height:22px;border:1px solid #34506a;border-top:0;text-align:center;font:bold 13px/20px 'Liberation Sans',sans-serif;color:#000">X</div>
<div class="gb" style="left:752px;top:726px;width:144px;height:75px"></div>
<p class="la" style="left:760px;top:719px;font-size:12px">运行状态</p>
<p style="left:777px;top:744px;font:15px/18px 'DejaVu Sans',sans-serif;letter-spacing:-.2px">Apache:</p>
<p style="left:777px;top:770px;font:14px/18px 'DejaVu Sans',sans-serif">MySQL:</p>
<div style="left:856px;top:747px;width:11px;height:12px;border-radius:50%;background:#008000"></div>
<div style="left:856px;top:773px;width:11px;height:12px;border-radius:50%;background:#008000"></div>
<div class="gb" style="left:908px;top:726px;width:208px;height:75px"></div>
<p class="la" style="left:916px;top:719px"><span style="font:10px/16px 'Liberation Mono',monospace">phpStudy </span>启停</p>
<div class="b3" style="left:924px;top:751px;width:49px;height:32px;font-size:15px;color:#a0a0a0">启动</div>
<div class="b3" style="left:988px;top:751px;width:49px;height:32px;font-size:15px">停止</div>
<div class="b3" style="left:1052px;top:751px;width:49px;height:32px;font-size:15px">重启</div>
<div class="gb" style="left:752px;top:814px;width:214px;height:187px"></div>
<p class="la" style="left:760px;top:807px">提示信息</p>
<div class="wh" style="left:761px;top:826px;width:197px;height:167px;border:2px solid #8a8a8a;border-right-color:#ddd;border-bottom-color:#ddd"></div>
<div class="mi" style="left:763px;top:827px;font-size:12px;line-height:12px">
<div class="ln"><i>Apache</i>已经停止<i>..</i></div>
<div class="ln"><i>MySQL</i>已经停止<i>...</i></div>
<div class="ln">正在启动进程<i>....</i></div>
<div class="ln"><i>Apache</i>已经启动<i>..</i></div>
<div class="ln"><i>MySQL</i>已经启动<i>...</i></div>
</div>
<div class="mi" style="left:884px;top:827px;font-size:12px;line-height:12px">
<div class="ln"><i>10:18:26</i></div><div class="ln"><i>10:18:26</i></div><div class="ln"><i>10:18:27</i></div><div class="ln"><i>10:18:29</i></div><div class="ln"><i>10:18:29</i></div>
</div>
<div class="gb" style="left:976px;top:814px;width:140px;height:99px"></div>
<p class="la" style="left:983px;top:807px">运行模式</p>
<p class="la" style="left:1056px;top:807px;color:#008000">切换版本</p>
<div style="left:997px;top:836px;width:11px;height:11px;border-radius:50%;background:#fff;border:1px solid #999"></div>
<div style="left:997px;top:859px;width:11px;height:11px;border-radius:50%;background:radial-gradient(#111 0 2px,#fff 3px);border:1px solid #999"></div>
<p style="left:1013px;top:833px">系统服务</p>
<p style="left:1013px;top:856px">非服务模式</p>
<div class="b3" style="left:1055px;top:881px;width:49px;height:24px">应用</div>
<div class="b3" style="left:988px;top:922px;width:113px;height:32px">MySQL管理器</div>
<div class="b3" style="left:988px;top:965px;width:113px;height:32px;padding-left:20px">其他选项菜单</div>
<svg width="16" height="16" viewBox="0 0 16 16" style="left:996px;top:973px"><circle cx="8" cy="8" r="5.500" fill="#bfe3fa" stroke="#3b9ae0" stroke-width="3" stroke-dasharray="3 1.500"/></svg>

<!-- Yi window -->
<div class="win" style="left:1292px;top:545px;width:513px;height:240px"></div>
<div class="cl" style="left:1299px;top:576px;width:499px;height:200px"></div>
<div style="left:1301px;top:553px;width:15px;height:15px;background:#0c8f93;color:#fff;font:bold 12px/15px 'Noto Sans CJK SC',sans-serif;text-align:center">易</div>
<div class="tb g" style="left:1700px;top:545px"><u style="left:27px"></u><u style="left:53px"></u><b class="mn"></b><b class="mx"></b><b class="xx">X</b></div>
<div class="gb" style="left:1309px;top:591px;width:356px;height:190px;border-color:#dcdcdc"></div>
<p class="la" style="left:1314px;top:582px">接包</p>
<div class="wh" style="left:1316px;top:600px;width:335px;height:170px;border:1px solid #777"></div>
<div class="ar up" style="left:1632px;top:602px;width:17px;height:17px"></div>
<div class="ar dn" style="left:1632px;top:749px;width:17px;height:17px"></div>
<i class="cb ck" style="left:1684px;top:598px"></i>
<p style="left:1699px;top:596px;font-size:11px">V50以下版本</p>
<div class="btn" style="left:1700px;top:641px;width:78px;height:30px">按钮</div>

<!-- 4-Run -->
<div style="left:1169px;top:769px;width:675px;height:249px;background:#66cbea"></div>
<svg width="16" height="13" viewBox="0 0 16 13" style="left:1180px;top:779px"><rect width="16" height="13" fill="#000" stroke="#bbb"/></svg>
<p style="left:1181px;top:780px;color:#fff;font:bold 8px/11px 'Liberation Mono',monospace">C:\</p>
<p style="left:1169px;top:775px;width:675px;text-align:center;font-size:15px;line-height:20px;color:#222">4-Run</p>
<div class="tb" style="left:1736px;top:769px"><u style="left:27px"></u><u style="left:53px"></u><div style="left:54px;top:0;width:45px;height:20px;background:#c75050"></div><b class="mn"></b><b class="mx"></b><b class="xx">X</b></div>
<div class="k" style="left:1178px;top:801px;width:640px;height:208px"></div>
<div style="left:1178px;top:818px;color:#c0c0c0;font:13.330px/16px 'Liberation Mono',monospace;white-space:pre;letter-spacing:0">D:\mud2.0\logincenter&gt;D:\mud2.0\logincenter\Openresty_For_Windows_1.13.5.1001_64
Bit\x64\nginx\nginx.exe -p "D:\mud2.0\LoginCenter\logincenter_win"</div>
<div style="left:1178px;top:862px;width:8px;height:3px;background:#c0c0c0"></div>
<div class="wh" style="left:1819px;top:801px;width:16px;height:208px"></div>
<div class="ar up" style="left:1819px;top:801px;width:16px;height:17px"></div>
<div style="left:1819px;top:819px;width:16px;height:16px;background:#cdcdcd"></div>
<div class="ar dn" style="left:1819px;top:992px;width:16px;height:17px"></div>
<p style="left:1524px;top:980px;font-size:25px;line-height:30px;color:#c8c8c8;white-space:pre">掘金技术社区 <span style="font-size:26px">@ echeverra</span></p>
</body></html>
